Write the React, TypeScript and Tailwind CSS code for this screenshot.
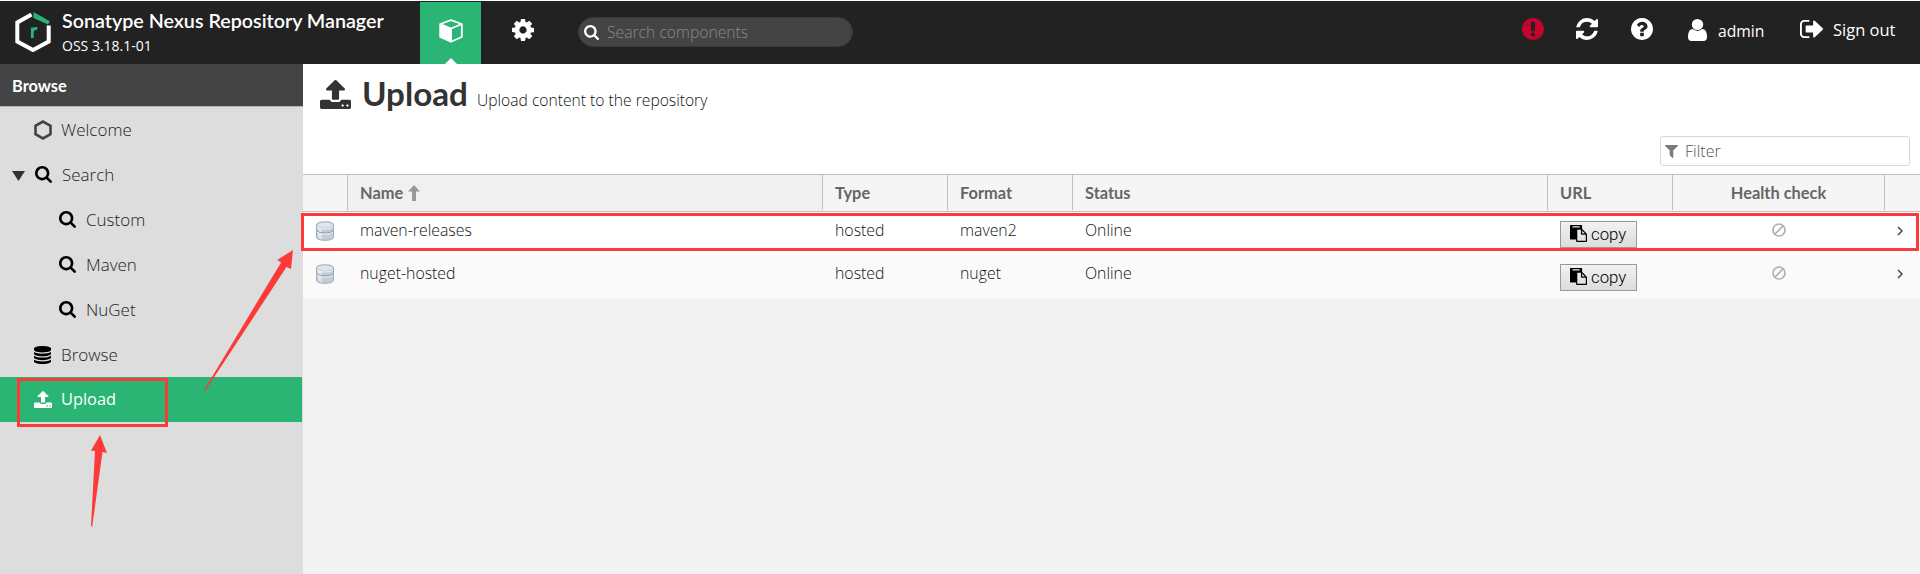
import React from 'react';

const ICONS = {
  cog: 'M1152 896q0-106-75-181t-181-75-181 75-75 181 75 181 181 75 181-75 75-181zm512-109v222q0 12-8 23t-20 13l-185 28q-19 54-39 91 35 50 107 138 10 12 10 25t-9 23q-27 37-99 108t-94 71q-12 0-26-9l-138-108q-44 23-91 38-16 136-29 186-7 28-36 28h-222q-14 0-24.5-8.5t-11.500-21.500l-28-184q-49-16-90-37l-141 107q-10 9-25 9-14 0-25-11-126-114-165-168-7-10-7-23 0-12 8-23 15-21 51-66.500t54-70.500q-27-50-41-99l-183-27q-13-2-21-12.500t-8-23.500v-222q0-12 8-23t19-13l186-28q14-46 39-92-40-57-107-138-10-12-10-24 0-10 9-23 26-36 98.500-107.500t94.500-71.500q13 0 26 10l138 107q44-23 91-38 16-136 29-186 7-28 36-28h222q14 0 24.500 8.500t11.500 21.500l28 184q49 16 90 37l142-107q9-9 24-9 13 0 25 10 129 119 165 170 7 8 7 22 0 12-8 23-15 21-51 66.500t-54 70.500q26 50 41 98l183 28q13 2 21 12.500t8 23.500z',
  search: 'M1216 832q0-185-131.500-316.500t-316.500-131.500-316.500 131.500-131.500 316.500 131.500 316.500 316.500 131.500 316.500-131.500 131.500-316.500zm512 832q0 52-38 90t-90 38q-54 0-90-38l-343-342q-179 124-399 124-143 0-273.500-55.500t-225-150-150-225-55.500-273.500 55.500-273.500 150-225 225-150 273.500-55.500 273.500 55.500 225 150 150 225 55.500 273.500q0 220-124 399l343 343q37 37 37 90z',
  refresh: 'M1639 1056q0 5-1 7-64 268-268 434.500t-478 166.500q-146 0-282.500-55t-243.500-157l-129 129q-19 19-45 19t-45-19-19-45v-448q0-26 19-45t45-19h448q26 0 45 19t19 45-19 45l-137 137q71 66 161 102t187 36q134 0 250-65t186-179q11-17 53-117 8-23 30-23h192q13 0 22.500 9.500t9.500 22.500zm25-800v448q0 26-19 45t-45 19h-448q-26 0-45-19t-19-45 19-45l138-138q-148-137-349-137-134 0-250 65t-186 179q-11 17-53 117-8 23-30 23h-199q-13 0-22.500-9.500t-9.500-22.500v-7q65-268 270-434.500t480-166.500q146 0 284 55.500t245 156.500l130-129q19-19 45-19t45 19 19 45z',
  question: 'M1024 1376v-192q0-14-9-23t-23-9h-192q-14 0-23 9t-9 23v192q0 14 9 23t23 9h192q14 0 23-9t9-23zm256-672q0-88-55.500-163t-138.500-116-170-41q-243 0-371 213-15 24 8 42l132 100q7 6 19 6 16 0 25-12 53-68 86-92 34-24 86-24 48 0 85.500 26t37.500 59q0 38-20 61t-68 45q-63 28-115.500 86.500t-52.500 125.500v36q0 14 9 23t23 9h192q14 0 23-9t9-23q0-19 21.500-49.500t54.500-49.500q32-18 49-28.500t46-35 44.500-48 28-60.500 12.500-81zm384 192q0 209-103 385.500t-279.500 279.500-385.500 103-385.500-103-279.500-279.500-103-385.500 103-385.500 279.500-279.500 385.500-103 385.500 103 279.500 279.500 103 385.500z',
  alert: 'M896 128q209 0 385.500 103t279.500 279.500 103 385.500-103 385.500-279.500 279.500-385.500 103-385.500-103-279.500-279.500-103-385.500 103-385.500 279.500-279.500 385.500-103zm128 1247v-190q0-14-9-23.500t-22-9.500h-192q-13 0-23 10t-10 23v190q0 13 10 23t23 10h192q13 0 22-9.500t9-23.500zm-2-344l18-621q0-12-10-18-10-8-24-8h-220q-14 0-24 8-10 6-10 18l17 621q0 10 10 17.500t24 7.500h185q14 0 23.500-7.500t10.500-17.500z',
  user: 'M1536 1399q0 109-62.500 187t-150.500 78h-854q-88 0-150.500-78t-62.500-187q0-85 8.500-160.500t31.500-152 58.500-131 94-89 134.500-34.500q131 128 313 128t313-128q76 0 134.500 34.500t94 89 58.500 131 31.500 152 8.500 160.500zm-256-887q0 159-112.500 271.500t-271.500 112.500-271.500-112.500-112.500-271.500 112.500-271.500 271.500-112.500 271.500 112.500 112.500 271.500z',
  signOut: 'M704 1440q0 4 1 20t.5 26.500-3 23.500-10 19.500-20.500 6.500h-320q-119 0-203.500-84.500t-84.500-203.500v-704q0-119 84.500-203.500t203.500-84.500h320q13 0 22.500 9.500t9.500 22.500q0 4 1 20t.5 26.500-3 23.500-10 19.500-20.500 6.500h-320q-66 0-113 47t-47 113v704q0 66 47 113t113 47h312l11.500 1 11.500 3 8 5.500 7 9 2 13.500zm928-544q0 26-19 45l-544 544q-19 19-45 19t-45-19-19-45v-288h-448q-26 0-45-19t-19-45v-384q0-26 19-45t45-19h448v-288q0-26 19-45t45-19 45 19l544 544q19 19 19 45z',
  filter: 'M1595 295q17 41-14 70l-493 493v742q0 42-39 59-13 5-25 5-27 0-45-19l-256-256q-19-19-19-45v-486l-493-493q-31-29-14-70 17-39 59-39h1280q42 0 59 39z',
  database: 'M896 768q237 0 443-43t325-127v170q0 69-103 128t-280 93.500-385 34.500-385-34.500-280-93.500-103-128v-170q119 84 325 127t443 43zm0 768q237 0 443-43t325-127v170q0 69-103 128t-280 93.500-385 34.500-385-34.500-280-93.500-103-128v-170q119 84 325 127t443 43zm0-384q237 0 443-43t325-127v170q0 69-103 128t-280 93.500-385 34.500-385-34.500-280-93.500-103-128v-170q119 84 325 127t443 43zm0-1152q208 0 385 34.500t280 93.500 103 128v128q0 69-103 128t-280 93.500-385 34.500-385-34.500-280-93.500-103-128v-128q0-69 103-128t280-93.500 385-34.500z',
  upload: 'M1344 1472q0-26-19-45t-45-19-45 19-19 45 19 45 45 19 45-19 19-45zm256 0q0-26-19-45t-45-19-45 19-19 45 19 45 45 19 45-19 19-45zm128-224v320q0 40-28 68t-68 28h-1472q-40 0-68-28t-28-68v-320q0-40 28-68t68-28h427q21 56 70.500 92t110.500 36h256q61 0 110.500-36t70.500-92h427q40 0 68 28t28 68zm-325-648q-17 40-59 40h-256v448q0 26-19 45t-45 19h-256q-26 0-45-19t-19-45v-448h-256q-42 0-59-40-17-39 14-69l448-448q18-19 45-19t45 19l448 448q31 30 14 69z',
  paste: 'M768 1664h896v-640h-416q-40 0-68-28t-28-68v-416h-384v1152zm256-1440v-64q0-13-9.500-22.500t-22.500-9.500h-704q-13 0-22.500 9.500t-9.500 22.500v64q0 13 9.500 22.500t22.500 9.500h704q13 0 22.500-9.500t9.500-22.500zm256 672h299l-299-299v299zm512 128v672q0 40-28 68t-68 28h-960q-40 0-68-28t-28-68v-160h-544q-40 0-68-28t-28-68v-1344q0-40 28-68t68-28h1088q40 0 68 28t28 68v328q21 13 36 28l408 408q28 28 48 76t20 88z',
};

function Icon({ name, box = '0 0 1792 1792', className }: { name: keyof typeof ICONS; box?: string; className: string }) {
  return (
    <svg viewBox={box} preserveAspectRatio="none" fill="currentColor" className={`shrink-0 ${className}`}>
      <path d={ICONS[name]} />
    </svg>
  );
}

const BOX = {
  round: '128 128 1536 1536',
  search: '64 128 1664 1664',
  database: '128 0 1536 1792',
  upload: '64 64 1664 1600',
  user: '256 128 1280 1536',
  signOut: '64 256 1568 1280',
  filter: '190 256 1412 1408',
};

function Header() {
  return (
    <header className="flex h-[63px] shrink-0 bg-[#222222] text-white">
      <div className="flex w-[420px]">
        <svg viewBox="0 0 36 40" className="ml-[15px] mt-[11px] h-10 w-9 shrink-0">
          <path d="M16.500 2.400L2.300 10.500v19L18 38l15.700-8.500V13.500" fill="none" stroke="#fff" strokeWidth="4" />
          <path d="M18.500 0l16.300 9.300-1.800 3.200-14.500-6.500z" fill="#2ab574" />
          <path d="M17.300 26V15.500M17.300 19.500q1-3.500 5-3" fill="none" stroke="#2ab574" strokeWidth="2.800" />
        </svg>
        <div className="ml-[11px] mt-[8px] whitespace-nowrap">
          <div className="font-['Lato',sans-serif] text-[19.700px] font-semibold leading-6">Sonatype Nexus Repository Manager</div>
          <div className="mt-[3px] text-[14px] leading-5">OSS 3.18.1-01</div>
        </div>
      </div>
      <div className="mt-px flex w-[61px] flex-col items-center justify-between bg-[#2ab574]">
        <svg viewBox="0 0 24 24" className="mt-[17px] h-6 w-6">
          <path d="M12 1.200L22.800 5v13L12 22.800 1.200 18V5z" fill="none" stroke="#fff" strokeWidth="1.800" strokeLinejoin="round" />
          <path d="M1.200 5L12 9.500 22.800 5M12 9.500v13" fill="none" stroke="#fff" strokeWidth="1.800" />
          <path d="M1 5l11.500 4.500V23L1 18z" fill="#fff" />
        </svg>
        <svg viewBox="0 0 12 6" className="h-[6px] w-3"><path d="M6 0l6 6H0z" fill="#fff" /></svg>
      </div>
      <Icon name="cog" box={BOX.round} className="ml-[31px] mt-[18px] h-[22px] w-[22px]" />
      <div className="ml-[44px] mt-[16px] flex h-[30px] w-[275px] items-center rounded-full border border-[#393939] bg-[#444444] pl-[5px]">
        <Icon name="search" box={BOX.search} className="mt-px h-[15px] w-[15px]" />
        <span className="ml-2 mt-[2px] text-[15.700px] font-light text-[#8a8a8a]">Search components</span>
      </div>
      <div className="ml-auto flex whitespace-nowrap pr-[22px]">
        <Icon name="alert" box={BOX.round} className="mt-[17px] h-[22px] w-[22px] text-[#c4042f]" />
        <Icon name="refresh" box={BOX.round} className="ml-8 mt-[17px] h-[22px] w-[22px]" />
        <Icon name="question" box={BOX.round} className="ml-[33px] mt-[17px] h-[22px] w-[22px]" />
        <Icon name="user" box={BOX.user} className="ml-[35px] mt-[18px] h-[22px] w-[19px]" />
        <span className="ml-[11px] mt-[18px] w-[48px] text-[15.700px] leading-6">admin</span>
        <Icon name="signOut" box={BOX.signOut} className="ml-[34px] mt-[19px] h-[18px] w-[23px]" />
        <span className="ml-[10px] mt-[17px] w-[65px] text-[16.500px] leading-6">Sign out</span>
      </div>
    </header>
  );
}

function Item({ label, icon, className }: { label: string; icon: React.ReactNode; className: string }) {
  return (
    <li className={`flex h-[45px] items-center ${className}`}>
      {icon}
      <span>{label}</span>
    </li>
  );
}

function Sidebar() {
  const glass = <Icon name="search" box={BOX.search} className="mr-[10px] h-[17px] w-[17px] text-black" />;
  return (
    <aside className="flex w-[303px] shrink-0 flex-col bg-[#dddddd]">
      <div className="h-[43px] border-b border-[#b4b4b4] bg-[#444444] pl-3 font-['Lato',sans-serif] text-[16.400px] font-bold leading-[43px] text-white">Browse</div>
      <ul className="text-[17px] font-light text-[#222222]">
        <Item
          label="Welcome"
          className="pl-[34px]"
          icon={
            <svg viewBox="0 0 18 20" className="mr-[9px] h-5 w-[18px]">
              <path d="M9 1.600L16.500 5.800v8.400L9 18.400 1.500 14.200V5.800z" fill="none" stroke="#444" strokeWidth="2.600" />
            </svg>
          }
        />
        <Item
          label="Search"
          className="pl-3"
          icon={
            <>
              <svg viewBox="0 0 13 10" className="mr-[10px] mt-[3px] h-[10px] w-[13px]"><path d="M0 0h13L6.500 10z" fill="#333" /></svg>
              {glass}
            </>
          }
        />
        <Item label="Custom" className="pl-[59px]" icon={glass} />
        <Item label="Maven" className="pl-[59px]" icon={glass} />
        <Item label="NuGet" className="pl-[59px]" icon={glass} />
        <Item label="Browse" className="pl-[34px]" icon={<Icon name="database" box={BOX.database} className="mr-[10px] h-[18px] w-[17px] text-black" />} />
        <Item
          label="Upload"
          className="mr-px bg-[#2ab574] pl-[34px] text-[16.400px] font-normal text-white"
          icon={<Icon name="upload" box={BOX.upload} className="mr-[9px] h-[17px] w-[18px]" />}
        />
      </ul>
    </aside>
  );
}

const GRID = 'grid grid-cols-[45px_475px_125px_125px_475px_125px_212px_1fr]';

function Repo({ name, format, className }: { name: string; format: string; className: string }) {
  return (
    <div className={`${GRID} h-[43px] text-[15.850px] font-light leading-6 text-[#111111] ${className}`}>
      <svg viewBox="0 0 18 20" className="ml-[13px] mt-[9px] h-5 w-[18px]">
        <path d="M.5 4Q.5.800 9 .800T17.500 4v12q0 3.300-8.500 3.300T.5 16z" fill="#c3ccd6" stroke="#a3adb8" />
        <path d="M2 6v10q1 2 4 2.300V7.500z" fill="#dde4eb" />
        <ellipse cx="9" cy="4" rx="7.500" ry="2.600" fill="#dfe6ec" />
        <path d="M1 10q2 2 8 2t8-2" fill="none" stroke="#8f9ba8" />
        <path d="M1 11.200q2 2 8 2t8-2M1 6q2 2 8 2t8-2" fill="none" stroke="#eef2f6" />
      </svg>
      <div className="pl-3 pt-[6px]">{name}</div>
      <div className="pl-3 pt-[6px]">hosted</div>
      <div className="pl-3 pt-[6px]">{format}</div>
      <div className="pl-3 pt-[6px]">Online</div>
      <div className="pl-3 pt-[9px]">
        <button className="flex h-[27px] w-[77px] items-center border border-[#9a9a9a] bg-linear-to-b from-[#f2f2f2] to-[#dcdcdc] pb-px pl-[9px] font-['Roboto',sans-serif] text-[16.800px] font-light text-black">
          <Icon name="paste" className="mr-1 mb-px h-[17px] w-[17px]" />
          copy
        </button>
      </div>
      <div className="flex justify-center pr-px pt-[11px]">
        <svg viewBox="0 0 14 14" className="h-[14px] w-[14px]">
          <circle cx="7" cy="7" r="6" fill="none" stroke="#b0b0b0" strokeWidth="1.700" />
          <path d="M2.800 11.200l8.400-8.400" stroke="#b0b0b0" strokeWidth="1.600" />
        </svg>
      </div>
      <div className="pl-[12px] pt-[14px]">
        <svg viewBox="0 0 6 10" className="h-[10px] w-[6px]"><path d="M1 1l4 4-4 4" fill="none" stroke="#444" strokeWidth="1.500" /></svg>
      </div>
    </div>
  );
}

function Main() {
  const cell = 'h-[35px] border-l border-[#c0c0c0] pl-[12px]';
  return (
    <main className="flex min-w-0 flex-1 flex-col bg-[#f3f3f3]">
      <div className="flex h-[110px] flex-col bg-white">
        <div className="flex h-[72px] pl-[17px] text-[#333333]">
          <Icon name="upload" box={BOX.upload} className="mt-4 h-[29px] w-[31px]" />
          <div className="ml-[11px] mt-[9px] flex">
            <h1 className="w-[115px] font-['Lato',sans-serif] text-[33.200px] font-bold leading-10">Upload</h1>
            <span className="mt-[15px] text-[15.650px] font-light leading-6 text-[#111111]">Upload content to the repository</span>
          </div>
        </div>
        <div className="ml-auto mr-[10px] flex h-[30px] w-[250px] items-center rounded-[3px] border border-[#d8d8d8] pl-1 text-[16px] font-light text-[#555555]">
          <Icon name="filter" box={BOX.filter} className="mr-[7px] h-[13px] w-[13px] text-[#7a7a7a]" />
          Filter
        </div>
      </div>
      <div className={`${GRID} h-[38px] border-y border-[#c0c0c0] bg-[#f5f5f5] font-['Lato',sans-serif] text-[16.400px] font-bold leading-[36px] text-[#666666]`}>
        <div />
        <div className="-ml-px flex bg-[#f0f0f0]">
          <div className={`${cell} flex flex-1 items-center`}>
            Name
            <svg viewBox="0 0 12 16" className="ml-[5px] mt-px h-4 w-3"><path d="M6 0l6 6.500H8V16H4V6.500H0z" fill="#999" /></svg>
          </div>
        </div>
        <div className={`${cell} -ml-px`}>Type</div>
        <div className={`${cell} -ml-px`}>Format</div>
        <div className={`${cell} -ml-px`}>Status</div>
        <div className={`${cell} -ml-px`}>URL</div>
        <div className="-ml-px h-[35px] border-l border-[#c0c0c0] pr-px text-center">Health check</div>
        <div className={`${cell} -ml-px`} />
      </div>
      <Repo name="maven-releases" format="maven2" className="bg-white" />
      <Repo name="nuget-hosted" format="nuget" className="bg-[#fafafa]" />
    </main>
  );
}

export default function App() {
  return (
    <div className="relative flex h-[574px] w-[1920px] flex-col overflow-hidden bg-white pt-px font-['Open_Sans',sans-serif]">
      <Header />
      <div className="flex flex-1">
        <Sidebar />
        <Main />
      </div>
      <div className="absolute left-[17px] top-[378px] h-[49px] w-[151px] border-3 border-[#fc3a3a]" />
      <div className="absolute left-[301px] top-[213px] h-[38px] w-[1618px] border-3 border-[#fc3a3a]" />
      <svg viewBox="0 0 300 574" className="absolute left-0 top-0 h-[574px] w-[300px]" fill="#fc3a3a">
        <path d="M293 250l-15.700 10 3.800 2.400L204 390.300l1 .7L286.500 267l4.500 2z" />
        <path d="M100 435l-9 15.500 4 .5-4 75 1.200.8L102.500 452l4.500 1z" />
      </svg>
    </div>
  );
}
